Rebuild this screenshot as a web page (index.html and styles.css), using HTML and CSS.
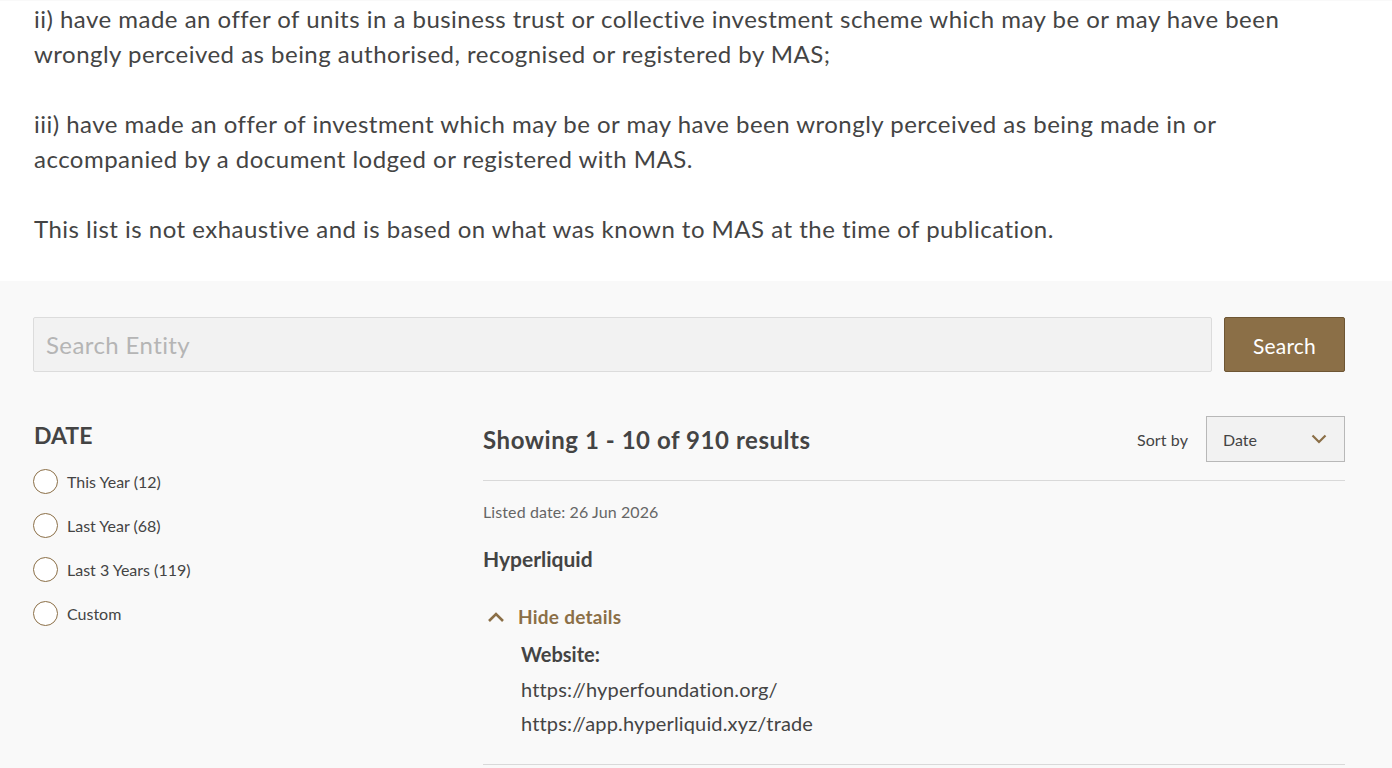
FILE: index.html
```html
<!DOCTYPE html>
<html lang="en">
<head>
<meta charset="utf-8">
<title>Investor Alert List</title>
<link rel="stylesheet" href="styles.css">
</head>
<body>
<section class="intro">
  <div class="container">
    <p>ii) have made an offer of units in a business trust or collective investment scheme which may be or may have been wrongly perceived as being authorised, recognised or registered by MAS;</p>
    <p>iii) have made an offer of investment which may be or may have been wrongly perceived as being made in or accompanied by a document lodged or registered with MAS.</p>
    <p>This list is not exhaustive and is based on what was known to MAS at the time of publication.</p>
  </div>
</section>
<section class="listing">
  <div class="container">
    <form class="search-bar">
      <input class="search-input" type="text" placeholder="Search Entity">
      <button class="search-btn" type="button">Search</button>
    </form>
    <div class="layout">
      <aside class="filters">
        <h3 class="filter-title">DATE</h3>
        <label class="radio"><span class="radio-circle"></span><span>This Year (12)</span></label>
        <label class="radio"><span class="radio-circle"></span><span>Last Year (68)</span></label>
        <label class="radio"><span class="radio-circle"></span><span>Last 3 Years (119)</span></label>
        <label class="radio"><span class="radio-circle"></span><span>Custom</span></label>
      </aside>
      <main class="results">
        <div class="results-head">
          <h2 class="results-count">Showing 1 - 10 of 910 results</h2>
          <div class="sort">
            <span class="sort-label">Sort by</span>
            <div class="select">
              <span>Date</span>
              <svg width="16" height="10" viewBox="0 0 16 10"><path d="M1.5 1.5 L8 8 L14.5 1.5" fill="none" stroke="#8b6f47" stroke-width="2.2"/></svg>
            </div>
          </div>
        </div>
        <article class="item">
          <div class="item-date">Listed date: 26 Jun 2026</div>
          <h4 class="item-name">Hyperliquid</h4>
          <div class="toggle">
            <svg width="18" height="12" viewBox="0 0 18 12"><path d="M2 10 L9 3 L16 10" fill="none" stroke="#8b6f47" stroke-width="2.6"/></svg>
            <span>Hide details</span>
          </div>
          <div class="details">
            <div class="detail-label">Website:</div>
            <div class="detail-line">https://hyperfoundation.org/</div>
            <div class="detail-line">https://app.hyperliquid.xyz/trade</div>
          </div>
        </article>
      </main>
    </div>
  </div>
</section>
</body>
</html>
```

FILE: styles.css
```css
* { box-sizing: border-box; }
html, body { margin: 0; padding: 0; }
body {
  font-family: Lato, "Noto Sans", sans-serif;
  color: #444;
  background: #f9f9f9;
}
.container {
  width: 1312px;
  margin: 0 0 0 33px;
}
.intro {
  background: #fff;
  padding: 0 0 32px;
}
.intro p {
  margin: 0 0 35px;
  font-size: 24px;
  letter-spacing: 0.48px;
  line-height: 35px;
  padding-left: 1px;
}
.intro p:first-child { margin-top: 1px; }
.intro p:last-child { margin-bottom: 0; padding-bottom: 3px; }
.listing {
  background: #f9f9f9;
  padding-top: 36px;
  height: 490px;
}
.search-bar {
  display: flex;
  gap: 12px;
  margin: 0;
}
.search-input {
  flex: 1;
  height: 55px;
  background: #f2f2f2;
  border: 1px solid #dcdcdc;
  border-radius: 2px;
  padding: 0 12px;
  font-family: inherit;
  font-size: 24px;
  letter-spacing: 0.4px;
  color: #444;
  outline: none;
}
.search-input::placeholder { color: #b5b5b5; }
.search-btn {
  width: 121px;
  height: 55px;
  background: #8b6f47;
  border: 1px solid #6e5634;
  border-radius: 2px;
  color: #fff;
  font-family: inherit;
  font-size: 21px;
  letter-spacing: 0.2px;
  padding: 2px 0 0;
}
.layout {
  display: grid;
  grid-template-columns: 450px 1fr;
  margin-top: 44px;
}
.filters { padding-left: 1px; }
.filter-title {
  margin: 0 0 15px;
  font-size: 23px;
  font-weight: 700;
  line-height: 38px;
}
.radio {
  display: flex;
  align-items: center;
  gap: 9px;
  font-size: 16px;
  height: 24px;
  margin-bottom: 20px;
  margin-left: -1px;
}
.radio-circle {
  width: 25px;
  height: 25px;
  border: 1.5px solid #8b6f47;
  border-radius: 50%;
  flex: none;
  background: #fff;
}
.results-head {
  display: flex;
  justify-content: space-between;
  align-items: center;
  height: 46px;
}
.results-count {
  margin: 0;
  font-size: 24px;
  letter-spacing: 0.55px;
  font-weight: 700;
}
.sort {
  display: flex;
  align-items: center;
  gap: 18px;
}
.sort-label { font-size: 16px; letter-spacing: 0.1px; }
.select {
  width: 139px;
  height: 46px;
  background: #f2f2f2;
  border: 1px solid #b8b8b8;
  display: flex;
  align-items: center;
  justify-content: space-between;
  padding: 0 17px 0 16px;
  font-size: 16px;
}
.item {
  border-top: 1px solid #d9d9d9;
  border-bottom: 1px solid #d9d9d9;
  margin-top: 18px;
  padding: 21px 0 24px;
}
.item-date {
  font-size: 16px;
  letter-spacing: 0.1px;
  color: #666;
  line-height: 20px;
}
.item-name {
  margin: 22px 0 0;
  font-size: 21px;
  font-weight: 700;
  line-height: 30px;
}
.toggle {
  display: flex;
  align-items: center;
  gap: 13px;
  margin-top: 31px;
  color: #8b6f47;
  font-weight: 700;
  font-size: 19px;
  letter-spacing: 0.25px;
  line-height: 24px;
  padding-left: 4px;
}
.details {
  padding-left: 38px;
  margin-top: 8px;
}
.detail-label {
  font-weight: 700;
  font-size: 20px;
  line-height: 35px;
}
.detail-line {
  font-size: 20px;
  letter-spacing: 0.15px;
  line-height: 34px;
}
```
